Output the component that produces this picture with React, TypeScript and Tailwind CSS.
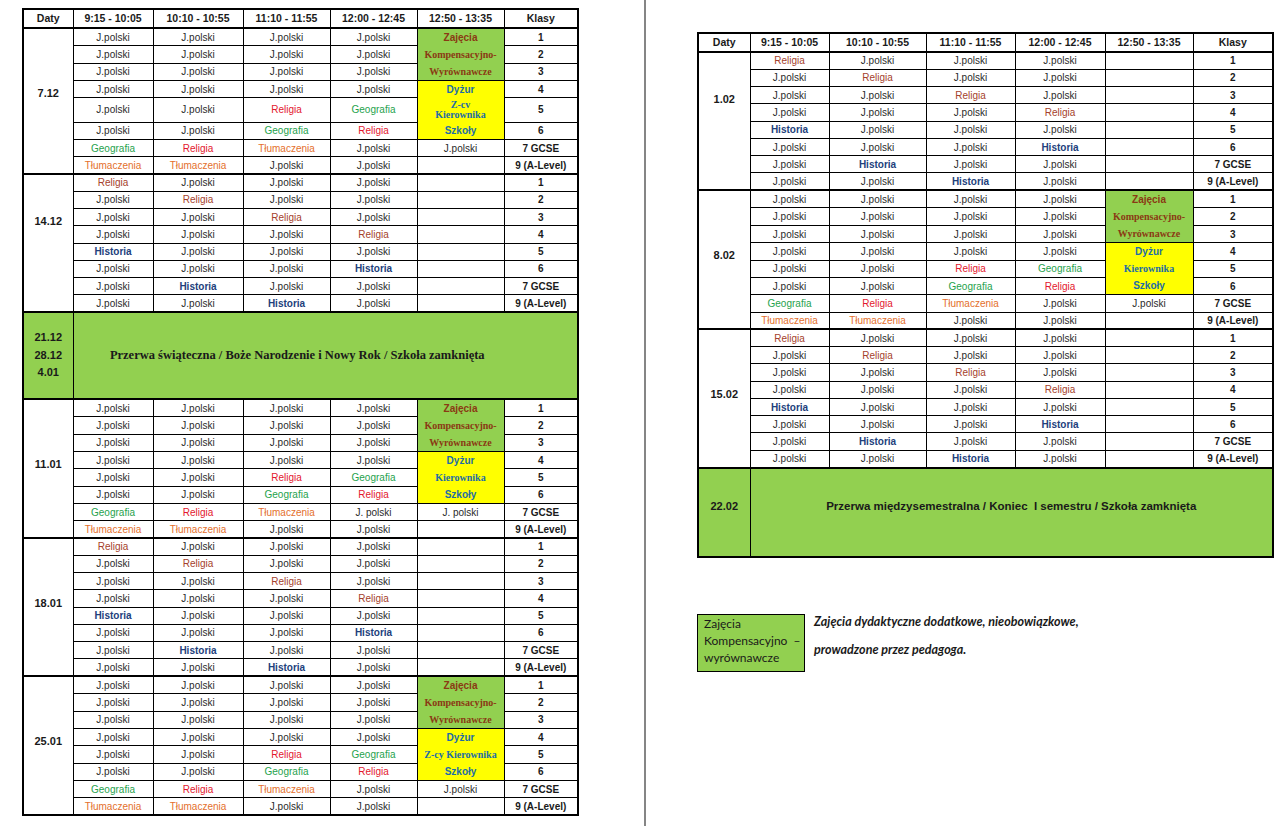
type Code = 'J' | 'J_' | 'R' | 'Rb' | 'H' | 'G' | 'T';

const subjects: Record<Code, { text: string; cls: string }> = {
  J: { text: 'J.polski', cls: 'text-[#2a2a2a]' },
  J_: { text: 'J. polski', cls: 'text-[#2a2a2a]' },
  R: { text: 'Religia', cls: 'text-[#e3172e]' },
  Rb: { text: 'Religia', cls: 'text-[#a5412c]' },
  H: { text: 'Historia', cls: 'text-[#223f7c] font-bold' },
  G: { text: 'Geografia', cls: 'text-[#26a24d]' },
  T: { text: 'Tłumaczenia', cls: 'text-[#e4702d]' },
};

const klasy = ['1', '2', '3', '4', '5', '6', '7 GCSE', '9 (A-Level)'];
const times = ['9:15 - 10:05', '10:10 - 10:55', '11:10 - 11:55', '12:00 - 12:45', '12:50 - 13:35'];

// bloki z dyżurem (zajęcia kompensacyjne + dyżur)
const gridA: Code[][] = [
  ['J', 'J', 'J', 'J'],
  ['J', 'J', 'J', 'J'],
  ['J', 'J', 'J', 'J'],
  ['J', 'J', 'J', 'J'],
  ['J', 'J', 'R', 'G'],
  ['J', 'J', 'G', 'R'],
  ['G', 'R', 'T', 'J'],
  ['T', 'T', 'J', 'J'],
];

const gridA2: Code[][] = gridA.map((r, i) => (i === 6 ? ['G', 'R', 'T', 'J_'] : r));

// bloki "przekątne" z religią i historią
const gridB: Code[][] = [
  ['Rb', 'J', 'J', 'J'],
  ['J', 'Rb', 'J', 'J'],
  ['J', 'J', 'Rb', 'J'],
  ['J', 'J', 'J', 'Rb'],
  ['H', 'J', 'J', 'J'],
  ['J', 'J', 'J', 'H'],
  ['J', 'H', 'J', 'J'],
  ['J', 'J', 'H', 'J'],
];

const cell = 'border border-black text-center align-middle p-0';

function Subject({ code }: { code: Code }) {
  const s = subjects[code];
  return <td className={`${cell} ${s.cls}`}>{s.text}</td>;
}

function Colgroup({ widths }: { widths: number[] }) {
  return (
    <colgroup>
      {widths.map((w, i) => (
        <col key={i} style={{ width: w }} />
      ))}
    </colgroup>
  );
}

function Header() {
  return (
    <thead>
      <tr className="h-[19px] font-bold text-[10.5px] text-[#1a1a1a]">
        <th className={cell}>Daty</th>
        {times.map((t) => (
          <th key={t} className={cell}>
            {t}
          </th>
        ))}
        <th className={cell}>Klasy</th>
      </tr>
    </thead>
  );
}

function Duty({ middle, tall }: { middle: React.ReactNode; tall?: boolean }) {
  return (
    <td rowSpan={3} className="border border-black bg-[#ffff00] p-0 text-center align-middle font-bold text-[10px] text-[#1d6da6]">
      <div className="h-[17px] leading-[17px]">Dyżur</div>
      {tall ? (
        <div className="flex h-[24px] flex-col justify-center font-['Liberation_Serif',serif] leading-[10px]">{middle}</div>
      ) : (
        <div className="h-[17px] font-['Liberation_Serif',serif] leading-[17px]">{middle}</div>
      )}
      <div className="h-[17px] leading-[17px]">Szkoły</div>
    </td>
  );
}

function Block({
  date,
  grid,
  duty,
  extra = 'J',
  tall,
  dateTop,
}: {
  date: string;
  grid: Code[][];
  duty?: React.ReactNode;
  extra?: Code;
  tall?: boolean;
  dateTop: 'pt-[38px]' | 'pt-[56px]';
}) {
  return (
    <tbody className="border-t-2 border-black">
      {grid.map((row, i) => (
        <tr key={i} className={tall && i === 4 ? 'h-[24px]' : 'h-[17.25px]'}>
          {i === 0 && (
            <td rowSpan={8} className={`border border-black p-0 text-center align-top font-bold text-[11px] text-[#1a1a1a] ${dateTop}`}>
              {date}
            </td>
          )}
          {row.map((c, j) => (
            <Subject key={j} code={c} />
          ))}
          {duty ? (
            <>
              {i === 0 && (
                <td rowSpan={3} className="border border-black bg-[#92d050] p-0 text-center align-middle font-bold text-[10px] text-[#8a3a14]">
                  <div className="h-[17px] font-['Liberation_Sans',sans-serif] leading-[17px]">Zajęcia</div>
                  <div className="h-[17px] font-['Liberation_Serif',serif] leading-[17px]">Kompensacyjno-</div>
                  <div className="h-[17px] font-['Liberation_Serif',serif] leading-[17px]">Wyrównawcze</div>
                </td>
              )}
              {i === 3 && duty}
              {i === 6 && <Subject code={extra} />}
              {i === 7 && <td className={cell} />}
            </>
          ) : (
            <td className={cell} />
          )}
          <td className={`${cell} font-bold text-[#1a1a1a]`}>{klasy[i]}</td>
        </tr>
      ))}
    </tbody>
  );
}

export default function App() {
  return (
    <div className="flex h-[826px] w-[1286px] overflow-hidden bg-white font-['Liberation_Sans',Arial,sans-serif] text-[10px]">
      <div className="w-[644px] shrink-0 pl-[22px] pt-[8px]">
        <table className="table-fixed border-collapse border-2 border-black">
          <Colgroup widths={[50, 80, 90, 87, 87, 87, 74]} />
          <Header />
          <Block date="7.12" grid={gridA} tall dateTop="pt-[56px]" duty={<Duty tall middle={<><span>Z-cv</span><span>Kierownika</span></>} />} />
          <Block date="14.12" grid={gridB} dateTop="pt-[38px]" />
          <tbody className="border-t-2 border-black">
            <tr className="h-[87px] bg-[#92d050]">
              <td className="border border-black p-0 text-center align-middle font-bold text-[11px] leading-[17.5px] text-[#1a1a1a]">
                21.12
                <br />
                28.12
                <br />
                4.01
              </td>
              <td colSpan={6} className="border border-black p-0 pr-[56px] text-center align-middle font-['Liberation_Serif',serif] text-[12.5px] font-bold text-[#1a1a1a]">
                Przerwa świąteczna / Boże Narodzenie i Nowy Rok / Szkoła zamknięta
              </td>
            </tr>
          </tbody>
          <Block date="11.01" grid={gridA2} extra="J_" dateTop="pt-[56px]" duty={<Duty middle="Kierownika" />} />
          <Block date="18.01" grid={gridB} dateTop="pt-[56px]" />
          <Block date="25.01" grid={gridA} dateTop="pt-[56px]" duty={<Duty middle="Z-cy Kierownika" />} />
        </table>
      </div>

      <div className="w-[2px] shrink-0 bg-[#858585]" />

      <div className="flex flex-col pl-[51px] pt-[32px]">
        <table className="table-fixed border-collapse border-2 border-black">
          <Colgroup widths={[52, 79, 97, 89, 90, 88, 80]} />
          <Header />
          <Block date="1.02" grid={gridB} dateTop="pt-[38px]" />
          <Block date="8.02" grid={gridA} dateTop="pt-[56px]" duty={<Duty middle="Kierownika" />} />
          <Block date="15.02" grid={gridB} dateTop="pt-[56px]" />
          <tbody className="border-t-2 border-black">
            <tr className="h-[89px] bg-[#92d050]">
              <td className="border border-black p-0 pb-[12px] text-center align-middle font-bold text-[11px] text-[#1a1a1a]">22.02</td>
              <td colSpan={6} className="whitespace-pre border border-black p-0 pb-[12px] text-center align-middle text-[11.5px] font-bold text-[#1a1a1a]">
                {'Przerwa międzysemestralna / Koniec  I semestru / Szkoła zamknięta'}
              </td>
            </tr>
          </tbody>
        </table>

        <div className="mt-[57px] flex items-start">
          <div className="h-[58px] w-[108px] border border-black bg-[#92d050] px-[6px] font-['Lato',sans-serif] text-[12px] leading-[17px] text-[#1a1a1a]">
            Zajęcia
            <br />
            <span className="whitespace-pre">{'Kompensacyjno  –'}</span>
            <br />
            wyrównawcze
          </div>
          <div className="-mt-[6px] ml-[9px] font-['Lato',sans-serif] text-[12.5px] font-bold italic leading-[28px] text-[#1a1a1a]">
            Zajęcia dydaktyczne dodatkowe, nieobowiązkowe,
            <br />
            prowadzone przez pedagoga.
          </div>
        </div>
      </div>
    </div>
  );
}
